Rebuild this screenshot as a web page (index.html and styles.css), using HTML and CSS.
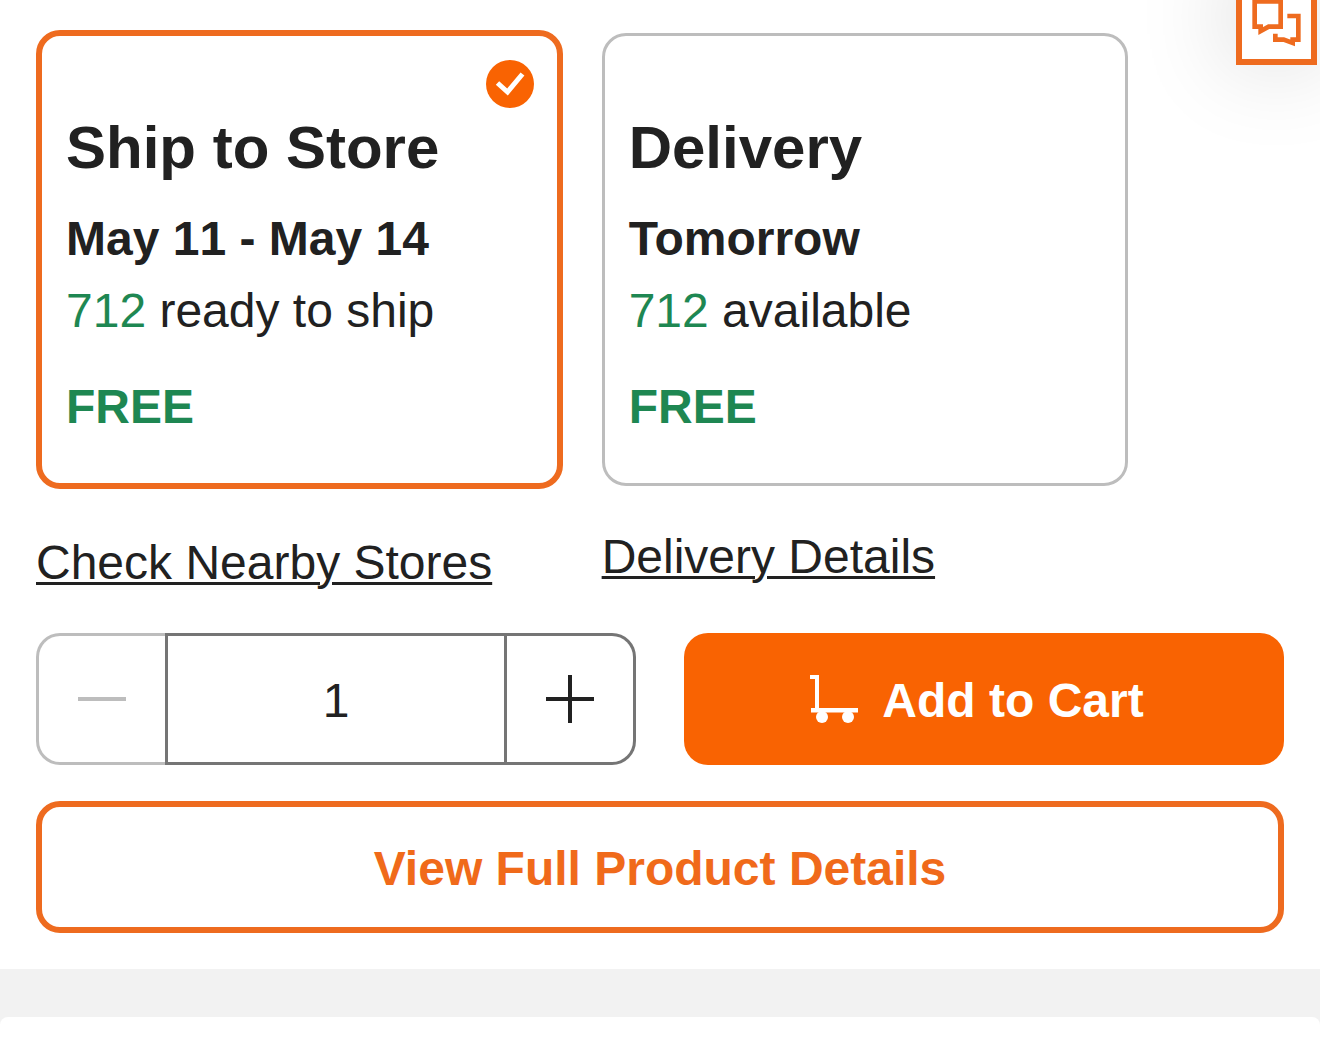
FILE: index.html
```html
<!DOCTYPE html>
<html lang="en">
<head>
    <meta charset="UTF-8">
    <meta name="viewport" content="width=device-width, initial-scale=1.0">
    <title>Product Fulfillment</title>
    <link rel="stylesheet" href="styles.css">
</head>
<body>
    <button type="button" class="chat" aria-label="Chat">
        <svg viewBox="366 -30 207 207" fill="none" stroke="#ee6b1f" stroke-width="14">
            <path d="M404 4H482V80H446L422 93V80H404Z"/>
            <path d="M502 48H535V119H518V129L491 119H466V101"/>
        </svg>
    </button>

    <main class="buybox">
        <div class="options">
            <div class="option selected">
                <button type="button" class="card" aria-pressed="true">
                    <svg class="check" viewBox="0 0 96 96">
                        <circle cx="48" cy="48" r="48" fill="#f96302"/>
                        <path d="M23 46L43 64L73 28" fill="none" stroke="#fff" stroke-width="10"/>
                    </svg>
                    <span class="title">Ship to Store</span>
                    <span class="date range">May 11 - May 14</span>
                    <span class="stock"><span class="count">712</span> ready to ship</span>
                    <span class="price">FREE</span>
                </button>
                <a href="#">Check Nearby Stores</a>
            </div>
            <div class="option">
                <button type="button" class="card" aria-pressed="false">
                    <span class="title">Delivery</span>
                    <span class="date">Tomorrow</span>
                    <span class="stock"><span class="count">712</span> available</span>
                    <span class="price">FREE</span>
                </button>
                <a href="#">Delivery Details</a>
            </div>
        </div>

        <div class="actions">
            <div class="stepper">
                <button type="button" class="minus" aria-label="Decrease quantity" disabled>
                    <svg viewBox="0 0 48 48" stroke="currentColor" stroke-width="4">
                        <path d="M0 24H48"/>
                    </svg>
                </button>
                <input type="text" value="1" inputmode="numeric" aria-label="Quantity">
                <button type="button" class="plus" aria-label="Increase quantity">
                    <svg viewBox="0 0 48 48" stroke="currentColor" stroke-width="4">
                        <path d="M0 24H48M24 0V48"/>
                    </svg>
                </button>
            </div>
            <button type="button" class="btn btn-cart">
                <svg viewBox="0 0 96 96" fill="currentColor">
                    <path d="M0 0H18V66H96V75H2V66H10V8H0Z"/>
                    <circle cx="24" cy="84" r="12"/>
                    <circle cx="76" cy="84" r="12"/>
                </svg>
                <span>Add to Cart</span>
            </button>
        </div>

        <button type="button" class="btn btn-details"><span>View Full Product Details</span></button>
    </main>

    <section class="next"></section>
</body>
</html>
```
FILE: styles.css
```css
* {
    box-sizing: border-box;
}

body {
    font-family: "Helvetica Neue", "Liberation Sans", Arial, sans-serif;
    font-size: 48px;
    line-height: 72px;
    margin: 0;
    min-height: 100vh;
    display: flex;
    flex-direction: column;
    background: #f2f2f2;
    color: #212121;
}

button,
input {
    font: inherit;
    color: inherit;
    margin: 0;
    padding: 0;
    background: #fff;
    cursor: pointer;
}

svg {
    display: block;
    width: 48px;
    height: 48px;
}

a {
    color: inherit;
    text-decoration-thickness: 3px;
    text-underline-offset: 3px;
}

.chat {
    position: absolute;
    top: -16px;
    right: 3px;
    width: 81px;
    height: 81px;
    border: 6px solid #ee6b1f;
    box-shadow: 0 -8px 100px rgba(0, 0, 0, 0.2);
}

.chat svg {
    width: 100%;
    height: 100%;
}

.buybox {
    background: #fff;
    padding: 30px 36px 36px;
    margin-bottom: 48px;
}

/* fulfillment options */
.options {
    display: grid;
    grid-template-columns: 42.2% 42.2%;
    gap: 39px;
    margin-bottom: 34px;
}

.option {
    display: flex;
    flex-direction: column;
    align-items: flex-start;
    gap: 35px;
    padding-top: 3px;
}

.option.selected {
    gap: 38px;
    padding-top: 0;
}

.card {
    position: relative;
    display: flex;
    flex-direction: column;
    width: 100%;
    padding: 73px 24px 40px;
    border: 3px solid #bdbdbd;
    border-radius: 24px;
    text-align: left;
}

.selected .card {
    border: 6px solid #ee6b1f;
}

.check {
    position: absolute;
    top: 24px;
    right: 23px;
}

.title {
    font-size: 60px;
    font-weight: bold;
    line-height: 78px;
    margin-bottom: 16px;
}

.date {
    font-weight: bold;
}

/* keep the digits evenly spaced */
.range {
    font-kerning: none;
}

.count {
    color: #1e8752;
}

.price {
    color: #1e8752;
    font-weight: bold;
    margin-top: 24px;
}

/* quantity and cart */
.actions {
    display: grid;
    grid-template-columns: 1fr 1fr;
    gap: 48px;
    margin-bottom: 36px;
}

.stepper {
    display: grid;
    grid-template-columns: 129px 1fr 129px;
    height: 132px;
}

.stepper button {
    display: flex;
    align-items: center;
    justify-content: center;
    border: 3px solid #757575;
}

.stepper .minus {
    border-color: #bdbdbd;
    border-right: none;
    border-radius: 24px 0 0 24px;
    color: #bdbdbd;
}

.stepper .plus {
    border-left: none;
    border-radius: 0 24px 24px 0;
}

.stepper input {
    min-width: 0;
    padding-top: 3px;
    border: 3px solid #757575;
    border-radius: 0;
    text-align: center;
}

.btn {
    display: flex;
    align-items: center;
    justify-content: center;
    gap: 24px;
    width: 100%;
    height: 132px;
    border: none;
    border-radius: 24px;
    font-weight: bold;
}

.btn span {
    padding-top: 3px;
}

.btn-cart {
    background: #f96302;
    color: #fff;
    padding-right: 14px;
}

.btn-details {
    border: 6px solid #ee6b1f;
    color: #f06a1a;
}

.next {
    flex: 1;
    background: #fff;
    border-radius: 8px 8px 0 0;
}
```
